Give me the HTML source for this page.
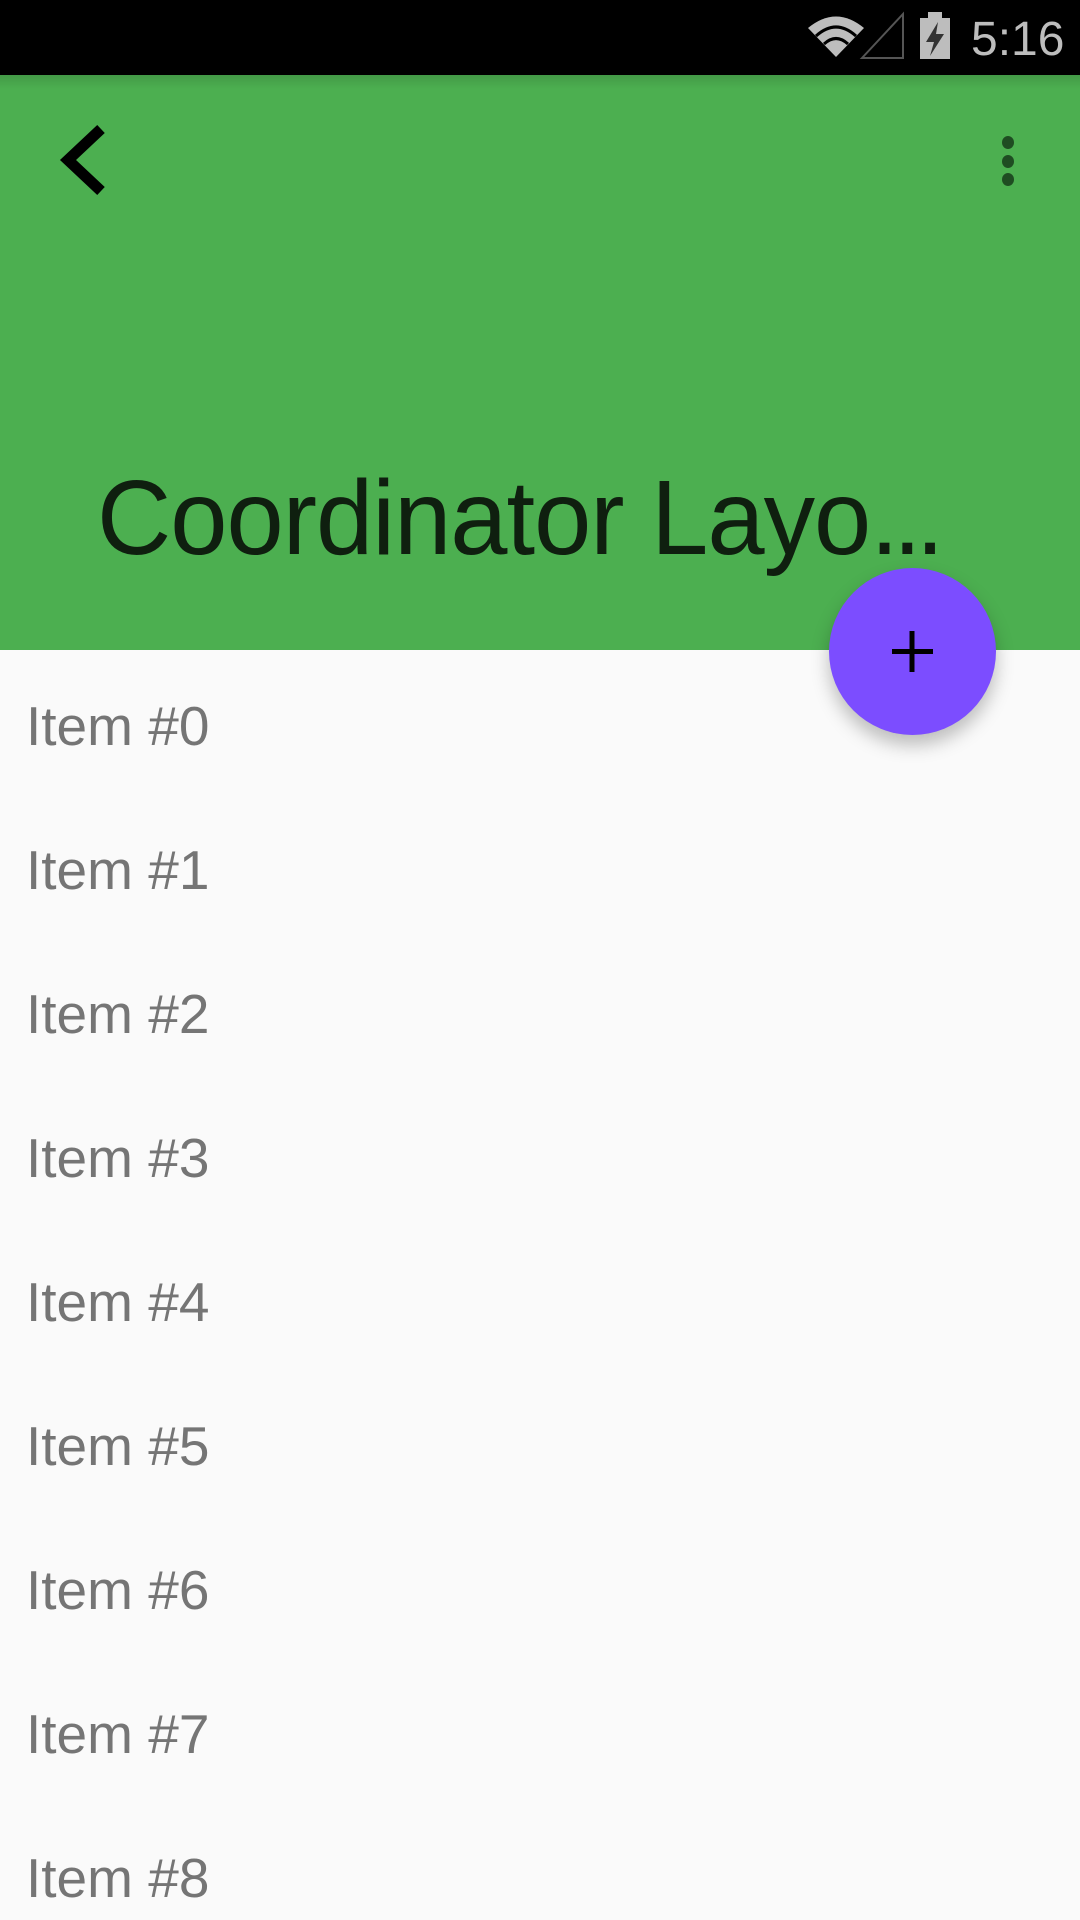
<!DOCTYPE html>
<html><head><style>
body{margin:0;width:1080px;height:1920px;overflow:hidden;background:#fafafa;font-family:"Liberation Sans",sans-serif;position:relative}
.sb{position:absolute;left:0;top:0;width:1080px;height:75px;background:#000}
.tb{position:absolute;left:0;top:75px;width:1080px;height:575px;background:#4caf50}
.tb:before{content:"";position:absolute;left:0;top:0;right:0;height:14px;background:linear-gradient(rgba(0,0,0,.12),rgba(0,0,0,0))}
.title{position:absolute;left:97px;top:390px;font-size:106px;color:#0f1f0f;line-height:1;letter-spacing:-1px;white-space:nowrap;transform:scaleX(0.97);transform-origin:left}
.item{position:absolute;left:26px;font-size:55px;color:#757575;line-height:1}
.fab{position:absolute;left:829px;top:568px;width:167px;height:167px;border-radius:50%;background:#7c4dff;box-shadow:0 10px 18px rgba(0,0,0,.25)}
.dot{position:absolute;left:1002px;width:12px;height:13px;border-radius:50%;background:#1f4d22}
</style></head><body>
<div class="sb">
<svg width="1080" height="75" style="position:absolute;left:0;top:0">
<path d="M808 28 Q836 5 864 28 L836 57 Z" fill="#bdbdbd"/>
<path d="M816 36 Q836 18 856 36" stroke="#000" stroke-width="3" fill="none"/>
<path d="M824 44 Q836 33 848 44" stroke="#000" stroke-width="3" fill="none"/>
<path d="M862 58 L903 14 L903 58 Z" fill="none" stroke="#555" stroke-width="2"/>
<rect x="920" y="18" width="30" height="41" fill="#bdbdbd"/>
<rect x="928" y="12" width="14" height="7" fill="#bdbdbd"/>
<path d="M938 22 L926 42 L934 42 L930 56 L944 34 L936 34 Z" fill="#333"/>
<text x="971" y="55" font-size="48" fill="#bdbdbd" font-family="Liberation Sans">5:16</text>
</svg>
</div>
<div class="tb">
<svg width="1080" height="200" style="position:absolute;left:0;top:0">
<path d="M101 54 L68 85 L101 116" stroke="#000" stroke-width="11" fill="none"/>
</svg>
<div class="dot" style="top:61px"></div>
<div class="dot" style="top:80px"></div>
<div class="dot" style="top:98px"></div>
<div class="title">Coordinator Layo<span style="letter-spacing:-6px">...</span></div>
</div>
<div class="item" style="top:699px">Item #0</div>
<div class="item" style="top:843px">Item #1</div>
<div class="item" style="top:987px">Item #2</div>
<div class="item" style="top:1131px">Item #3</div>
<div class="item" style="top:1275px">Item #4</div>
<div class="item" style="top:1419px">Item #5</div>
<div class="item" style="top:1563px">Item #6</div>
<div class="item" style="top:1707px">Item #7</div>
<div class="item" style="top:1851px">Item #8</div>
<div class="fab"><svg width="167" height="167" style="position:absolute;left:0;top:0"><path d="M83 63 V104 M63 83.5 H104" stroke="#000" stroke-width="5"/></svg></div>
</body></html>
